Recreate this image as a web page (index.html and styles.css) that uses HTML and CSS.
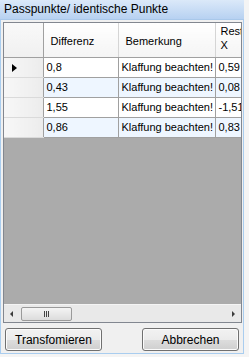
FILE: index.html
```html
<!DOCTYPE html>
<html>
<head>
<meta charset="utf-8">
<link rel="stylesheet" href="styles.css">
</head>
<body>
<div class="window">
  <div class="title">Passpunkte/ identische Punkte</div>
  <div class="grid">
    <div class="view">
      <table class="table">
        <colgroup>
          <col class="c-rh"><col class="c-diff"><col class="c-bem"><col class="c-rest">
        </colgroup>
        <thead>
          <tr>
            <th class="rh"></th>
            <th>Differenz</th>
            <th>Bemerkung</th>
            <th class="rest">Rest<br>X</th>
          </tr>
        </thead>
        <tbody>
          <tr><td class="rh"><span class="arrow"></span></td><td>0,8</td><td>Klaffung beachten!</td><td>0,59</td></tr>
          <tr class="alt"><td class="rh"></td><td>0,43</td><td>Klaffung beachten!</td><td>0,08</td></tr>
          <tr><td class="rh"></td><td>1,55</td><td>Klaffung beachten!</td><td>-1,51</td></tr>
          <tr class="alt"><td class="rh"></td><td>0,86</td><td>Klaffung beachten!</td><td>0,83</td></tr>
        </tbody>
      </table>
    </div>
    <div class="hscroll">
      <span class="sarrow left"></span>
      <div class="track">
        <div class="thumb"><span class="grip"></span><span class="grip"></span><span class="grip"></span></div>
      </div>
      <span class="sarrow right"></span>
    </div>
  </div>
  <div class="buttons">
    <button class="btn">Transfomieren</button>
    <button class="btn">Abbrechen</button>
  </div>
</div>
</body>
</html>
```
FILE: styles.css
```css
html, body {
  margin: 0;
  padding: 0;
  background: #f4f4f4;
  width: 249px;
  height: 357px;
  overflow: hidden;
}
.window {
  box-sizing: border-box;
  width: 244px;
  height: 354px;
  border: 1px solid #a9cdef;
  border-top: none;
  background: #f0f0f0;
  display: flex;
  flex-direction: column;
  font-family: "Liberation Sans", Arial, sans-serif;
}
.title {
  height: 19px;
  margin: 0 -1px;
  padding-left: 4px;
  background: linear-gradient(#dbe9f9, #b7d1f1);
  border-bottom: 1px solid #a9c8ea;
  font-size: 12px;
  line-height: 19px;
  color: #000;
}
.grid {
  margin: 2px 1px 0 2px;
  height: 301px;
  box-sizing: border-box;
  border: 1px solid #828790;
  background: #ababab;
  display: flex;
  flex-direction: column;
}
.view {
  flex: 1;
  overflow: hidden;
}
.table {
  border-collapse: collapse;
  table-layout: fixed;
  width: 280px;
  font-size: 11px;
}
.c-rh { width: 39px; }
.c-diff { width: 75px; }
.c-bem { width: 97px; }
.c-rest { width: 69px; }
.table th {
  height: 33px;
  padding: 1px 0 0 7px;
  text-align: left;
  font-weight: normal;
  background: linear-gradient(#ffffff, #f4f4f4);
  border-right: 1px solid #d5d5d5;
  border-bottom: 1px solid #a0a0a0;
  line-height: 14px;
  vertical-align: middle;
}
.table th.rest {
  vertical-align: top;
  padding: 1px 0 0 5px;
  line-height: 14px;
}
.table td {
  height: 19px;
  padding: 0 0 0 3px;
  border-right: 1px solid #a0a0a0;
  border-bottom: 1px solid #a0a0a0;
  background: #ffffff;
  white-space: nowrap;
  overflow: hidden;
  line-height: 19px;
}
.table tr.alt td { background: #eef6ff; }
.table .rh, .table tr.alt td.rh {
  background: linear-gradient(90deg, #f7f7f7, #ececec);
  border-right: 1px solid #a0a0a0;
  border-bottom: 1px solid #dadada;
  padding: 0;
}
.table th.rh {
  background: linear-gradient(#f9f9f9, #f0f0f0);
  border-bottom: 1px solid #a0a0a0;
  border-right: 1px solid #a0a0a0;
}
.arrow {
  display: block;
  width: 0;
  height: 0;
  margin-left: 8px;
  border-top: 4px solid transparent;
  border-bottom: 4px solid transparent;
  border-left: 5px solid #000;
}
.hscroll {
  height: 17px;
  background: #e9e9e9;
  border-top: 1px solid #f4f4f4;
  display: flex;
  align-items: center;
}
.sarrow {
  width: 0;
  height: 0;
  border-top: 3px solid transparent;
  border-bottom: 3px solid transparent;
}
.sarrow.left { border-right: 3px solid #3c3c3c; margin-left: 6px; margin-right: 8px; }
.sarrow.right { border-left: 3px solid #3c3c3c; margin-right: 6px; margin-left: 8px; }
.track { flex: 1; height: 15px; display: flex; align-items: center; }
.thumb {
  width: 51px;
  height: 14px;
  box-sizing: border-box;
  border: 1px solid #9a9a9a;
  border-radius: 2px;
  background: linear-gradient(#f4f4f4, #dcdcdc);
  display: flex;
  align-items: center;
  justify-content: center;
  gap: 1px;
}
.grip {
  width: 1px;
  height: 6px;
  background: #444;
}
.buttons {
  display: flex;
  justify-content: space-between;
  padding: 5px 4px 0 4px;
}
.btn {
  width: 97px;
  height: 23px;
  box-sizing: border-box;
  border: 1px solid #707070;
  border-radius: 3px;
  background: linear-gradient(#f2f2f2 0%, #ebebeb 50%, #dddddd 51%, #cfcfcf 100%);
  font-family: "Liberation Sans", Arial, sans-serif;
  font-size: 12px;
  color: #000;
  padding: 0;
  box-shadow: inset 0 0 0 1px #fbfbfb;
}
```
